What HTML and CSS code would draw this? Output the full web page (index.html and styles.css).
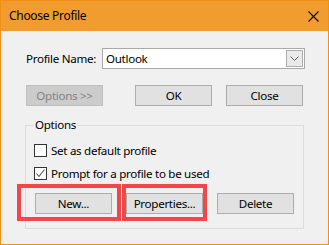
FILE: index.html
```html
<!DOCTYPE html>
<html>
<head>
<meta charset="utf-8">
<link rel="stylesheet" href="styles.css">
</head>
<body>
<div class="window">
  <div class="titlebar">
    <span class="title">Choose Profile</span>
    <svg class="close" width="11" height="11" viewBox="0 0 11 11"><path d="M0.5 0.5 L10.5 10.5 M10.5 0.5 L0.5 10.5" stroke="#000" stroke-width="1.1" fill="none"/></svg>
  </div>
  <div class="content">
    <div class="name-row">
      <span class="label">Profile Name:</span>
      <div class="combo">
        <span class="combo-text">Outlook</span>
        <span class="combo-btn"><svg width="9" height="5" viewBox="0 0 9 5"><path d="M0.5 0.5 L4.5 4.5 L8.5 0.5" stroke="#606060" stroke-width="1" fill="none"/></svg></span>
      </div>
    </div>
    <div class="btn-row">
      <button class="btn disabled">Options &gt;&gt;</button>
      <button class="btn ok">OK</button>
      <button class="btn">Close</button>
    </div>
    <fieldset class="group">
      <legend class="legend">Options</legend>
      <div class="check-row">
        <span class="checkbox"></span>
        <span class="check-label">Set as default profile</span>
      </div>
      <div class="check-row second">
        <span class="checkbox"><svg width="11" height="11" viewBox="0 0 11 11"><path d="M1.5 5.5 L4 8.5 L9.5 1.5" stroke="#555" stroke-width="1.1" fill="none"/></svg></span>
        <span class="check-label">Prompt for a profile to be used</span>
      </div>
      <div class="group-btns">
        <button class="btn">New...</button>
        <button class="btn">Properties...</button>
        <button class="btn">Delete</button>
      </div>
    </fieldset>
  </div>
  <div class="highlight hl-new"></div>
  <div class="highlight hl-props"></div>
</div>
</body>
</html>
```

FILE: styles.css
```css
* { box-sizing: border-box; }
html, body { margin: 0; padding: 0; }
body {
  font-family: "Noto Sans", "Open Sans", sans-serif;
  font-size: 11.6px;
  line-height: 16px;
  letter-spacing: -0.3px;
  color: #000;
  background: #f0f0f0;
}
.window {
  position: relative;
  width: 329px;
  height: 245px;
  border: 1px solid #ef8f17;
  background: #f0f0f0;
}
.titlebar {
  height: 30px;
  background: #f09c2e;
  display: flex;
  align-items: center;
  justify-content: space-between;
  padding: 0 9px 0 8px;
}
.title { font-size: 12px; }
.close { display: block; }
.content {
  padding: 17px 0 0 25px;
}
.name-row {
  display: flex;
  align-items: center;
  height: 21px;
}
.label {
  width: 76px;
  flex-shrink: 0;
  white-space: nowrap;
}
.combo {
  width: 203px;
  height: 21px;
  flex-shrink: 0;
  border: 1px solid #a9a9a9;
  background: #fff;
  display: flex;
  justify-content: space-between;
  padding: 1px 1px 0 3px;
}
.combo-text { line-height: 18px; }
.combo-btn {
  width: 17px;
  height: 17px;
  border: 1px solid #acacac;
  background: #eaeaea;
  display: flex;
  align-items: center;
  justify-content: center;
}
.combo-btn svg { display: block; }
.btn-row {
  display: flex;
  margin-top: 16px;
}
.btn {
  width: 77px;
  height: 21px;
  border: 1px solid #adadad;
  background: #e1e1e1;
  font: inherit;
  letter-spacing: inherit;
  color: #000;
  padding: 0;
  margin: 0;
  line-height: 18px;
  white-space: nowrap;
}
.btn.disabled {
  background: #cccccc;
  border-color: #bfbfbf;
  color: #838383;
}
.btn.ok { margin-left: 32px; margin-right: 14px; }
.group {
  margin: 11px 0 0 -1px;
  width: 279px;
  border: 1px solid #dcdcdc;
  padding: 11px 0 14px 8px;
  min-width: 0;
}
.legend {
  padding: 0 1px;
}
.check-row {
  display: flex;
  align-items: center;
  height: 13px;
  white-space: nowrap;
}
.check-row.second { margin-top: 10px; }
.checkbox {
  width: 13px;
  height: 13px;
  border: 1px solid #333;
  background: #fff;
  margin-right: 4px;
  display: flex;
  align-items: center;
  justify-content: center;
}
.checkbox svg { display: block; }
.group-btns {
  display: flex;
  gap: 14px;
  margin: 13px 0 0 1px;
}
.highlight {
  position: absolute;
  border: 4px solid #f04848;
  height: 37px;
  top: 183px;
}
.hl-new { left: 16px; width: 104px; }
.hl-props { left: 121px; width: 85px; }
```
